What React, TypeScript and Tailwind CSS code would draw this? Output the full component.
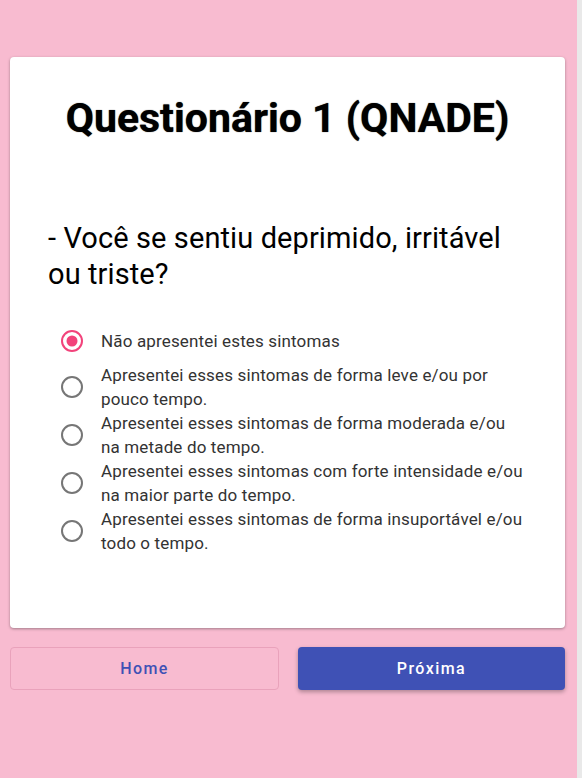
import React, { useState } from "react";

const options = [
  "Não apresentei estes sintomas",
  "Apresentei esses sintomas de forma leve e/ou por pouco tempo.",
  "Apresentei esses sintomas de forma moderada e/ou na metade do tempo.",
  "Apresentei esses sintomas com forte intensidade e/ou na maior parte do tempo.",
  "Apresentei esses sintomas de forma insuportável e/ou todo o tempo.",
];

function RadioIcon({ checked }: { checked: boolean }) {
  return (
    <svg width="24" height="24" viewBox="0 0 24 24">
      <circle
        cx="12"
        cy="12"
        r="10"
        fill="none"
        stroke={checked ? "#f2437b" : "#767676"}
        strokeWidth="2"
      />
      {checked && <circle cx="12" cy="12" r="5.5" fill="#f2437b" />}
    </svg>
  );
}

function App() {
  const [selected, setSelected] = useState(0);

  return (
    <div className="flex min-h-screen bg-[#f8bbd0] font-['Roboto',sans-serif]">
      <div className="flex-1 pt-[57px] pr-[12px] pl-[10px]">
        <div className="rounded bg-white px-[38px] pt-[36px] pb-[73px] shadow-[0_1px_3px_rgba(0,0,0,0.35)]">
          <h1 className="text-center text-[41px] leading-[50px] font-bold text-black [text-shadow:0_0_1px_rgba(0,0,0,0.8)]">
            Questionário 1 (QNADE)
          </h1>
          <p className="mt-[77px] text-[29px] leading-[36px] tracking-[0.1px] text-black">
            - Você se sentiu deprimido, irritável ou triste?
          </p>
          <div className="mt-[26px] flex flex-col">
            {options.map((opt, i) => (
              <label
                key={i}
                className={
                  i === 0
                    ? "flex min-h-[45px] cursor-pointer items-center"
                    : "flex min-h-[42px] cursor-pointer items-center"
                }
                onClick={() => setSelected(i)}
              >
                <span className="ml-[3px] flex h-[42px] w-[42px] shrink-0 items-center justify-center">
                  <RadioIcon checked={selected === i} />
                </span>
                <span className="ml-[8px] text-[17px] leading-[24px] tracking-[0.15px] text-[#333]">
                  {opt}
                </span>
              </label>
            ))}
          </div>
        </div>
        <div className="mt-[19px] flex gap-[19px]">
          <button className="h-[43px] flex-1 rounded border border-[#e9a2bb] text-[16px] font-medium tracking-[0.09em] text-[#3f51b5]">
            Home
          </button>
          <button className="h-[43px] flex-1 rounded bg-[#3f51b5] text-[16px] font-medium tracking-[0.09em] text-white shadow-[0_2px_4px_rgba(0,0,0,0.3)]">
            Próxima
          </button>
        </div>
      </div>
      <div className="w-[5px] bg-[#e9e9e9]" />
    </div>
  );
}

export default App;
